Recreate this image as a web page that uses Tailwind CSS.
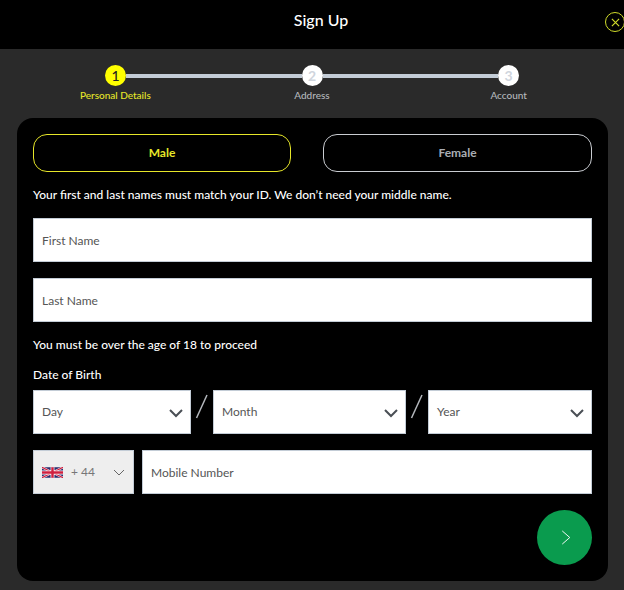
<!DOCTYPE html>
<html lang="en">
  <head>
    <meta charset="UTF-8" />
    <meta name="viewport" content="width=device-width, initial-scale=1.0" />
    <title>Sign Up</title>
    <script src="https://cdn.jsdelivr.net/npm/@tailwindcss/browser@4"></script>
  </head>
  <body class="bg-[#2a2a2a] font-['Lato','Open_Sans',sans-serif] h-[590px] w-[624px] overflow-hidden">
    <!-- header -->
    <header class="relative bg-black h-[49px] flex items-center justify-center pb-[9px]">
      <h1 class="text-white text-[16px] font-medium leading-none pl-[18px]">Sign Up</h1>
      <button class="absolute left-[605px] top-[12px] w-[20px] h-[20px] rounded-full border border-[#d0dc2a] flex items-center justify-center">
        <svg viewBox="0 0 10 10" class="w-[9px] h-[9px]" fill="none" stroke="#d0dc2a" stroke-width="1.3"><path d="M1 1l8 8M9 1l-8 8" /></svg>
      </button>
    </header>

    <!-- stepper -->
    <div class="px-[17px] h-[69px] pt-[16px]">
      <div class="flex items-center px-[88px]">
        <div class="w-[21px] h-[21px] rounded-full bg-[#ffff00] text-[#222] text-[14px] font-medium flex items-center justify-center shrink-0">1</div>
        <div class="flex-1 h-[4px] bg-[#c3ccd6]"></div>
        <div class="w-[21px] h-[21px] rounded-full bg-white text-[#cfd5dd] text-[14px] font-bold flex items-center justify-center shrink-0">2</div>
        <div class="flex-1 h-[4px] bg-[#c3ccd6]"></div>
        <div class="w-[21px] h-[21px] rounded-full bg-white text-[#cfd5dd] text-[14px] font-bold flex items-center justify-center shrink-0">3</div>
      </div>
      <div class="grid grid-cols-3 text-center text-[10px] font-medium leading-none mt-[4px]">
        <span class="text-[#e6e629]">Personal Details</span>
        <span class="text-[#b4b8bd]">Address</span>
        <span class="text-[#b4b8bd]">Account</span>
      </div>
    </div>

    <!-- form card -->
    <main class="mx-[17px] w-[591px] h-[463px] bg-black rounded-[16px] px-[16px] pt-[16px]">
      <div class="flex gap-[32px]">
        <button class="w-[258px] h-[38px] rounded-[14px] border border-[#e6e629] text-[#e6e629] text-[12px] font-bold">Male</button>
        <button class="w-[269px] h-[38px] rounded-[14px] border border-[#c9ccd1] text-[#a9adb3] text-[12px] font-bold">Female</button>
      </div>
      <p class="text-white text-[12px] font-medium leading-none mt-[17px]">Your first and last names must match your ID. We don’t need your middle name.</p>

      <div class="mt-[17px] flex flex-col gap-[16px]">
        <div class="h-[44px] bg-white border border-[#c3ccd6] px-[8px] pt-[1px] flex items-center text-[#555] text-[12px]">First Name</div>
        <div class="h-[44px] bg-white border border-[#c3ccd6] px-[8px] pt-[1px] flex items-center text-[#555] text-[12px]">Last Name</div>
      </div>

      <p class="text-white text-[12px] font-medium leading-none mt-[17px]">You must be over the age of 18 to proceed</p>
      <p class="text-white text-[12px] font-medium leading-none mt-[18px]">Date of Birth</p>

      <div class="mt-[9px] flex">
        <div class="w-[158px] h-[44px] bg-white border border-[#c3ccd6] pl-[8px] pr-[7px] flex items-center justify-between text-[#555] text-[12px]">
          <span>Day</span>
          <svg viewBox="0 0 14 9" class="w-[14px] h-[9px] mt-[3px]" fill="none" stroke="#4a4f55" stroke-width="2"><path d="M1 1l6 6 6-6" /></svg>
        </div>
        <div class="w-[22px] flex justify-center">
          <svg viewBox="0 0 22 44" class="w-[22px] h-[44px]" fill="none" stroke="#b4b8bd" stroke-width="1.5"><path d="M5.5 28L16 5" /></svg>
        </div>
        <div class="w-[193px] h-[44px] bg-white border border-[#c3ccd6] pl-[8px] pr-[7px] flex items-center justify-between text-[#555] text-[12px]">
          <span>Month</span>
          <svg viewBox="0 0 14 9" class="w-[14px] h-[9px] mt-[3px]" fill="none" stroke="#4a4f55" stroke-width="2"><path d="M1 1l6 6 6-6" /></svg>
        </div>
        <div class="w-[22px] flex justify-center">
          <svg viewBox="0 0 22 44" class="w-[22px] h-[44px]" fill="none" stroke="#b4b8bd" stroke-width="1.5"><path d="M5.5 28L16 5" /></svg>
        </div>
        <div class="w-[164px] h-[44px] bg-white border border-[#c3ccd6] pl-[8px] pr-[7px] flex items-center justify-between text-[#555] text-[12px]">
          <span>Year</span>
          <svg viewBox="0 0 14 9" class="w-[14px] h-[9px] mt-[3px]" fill="none" stroke="#4a4f55" stroke-width="2"><path d="M1 1l6 6 6-6" /></svg>
        </div>
      </div>

      <div class="mt-[16px] flex gap-[8px]">
        <div class="w-[101px] h-[44px] bg-[#eeeeee] border border-[#c3ccd6] pl-[8px] flex items-center text-[#777] text-[12px]">
          <svg viewBox="0 0 60 30" class="w-[21px] h-[11px] shrink-0">
            <rect width="60" height="30" fill="#2b2d6e" />
            <path d="M0 0L60 30M60 0L0 30" stroke="#fff" stroke-width="6" />
            <path d="M0 0L60 30M60 0L0 30" stroke="#d0203f" stroke-width="3.5" />
            <path d="M30 0V30M0 15H60" stroke="#fff" stroke-width="11" />
            <path d="M30 0V30M0 15H60" stroke="#d0203f" stroke-width="7" />
          </svg>
          <span class="ml-[8px] pb-[1px]">+ 44</span>
          <svg viewBox="0 0 12 7" class="w-[12px] h-[7px] ml-[18px]" fill="none" stroke="#666" stroke-width="1"><path d="M1 1l5 5 5-5" /></svg>
        </div>
        <div class="w-[450px] h-[44px] bg-white border border-[#c3ccd6] px-[8px] pt-[1px] flex items-center text-[#555] text-[12px]">Mobile Number</div>
      </div>

      <div class="mt-[16px] flex justify-end">
        <button class="w-[55px] h-[55px] rounded-full bg-[#0a9b4e] flex items-center justify-center">
          <svg viewBox="0 0 10 16" class="w-[10px] h-[15px] ml-[2px]" fill="none" stroke="#fff" stroke-width="1"><path d="M1 1l8 7-8 7" /></svg>
        </button>
      </div>
    </main>
  </body>
</html>
